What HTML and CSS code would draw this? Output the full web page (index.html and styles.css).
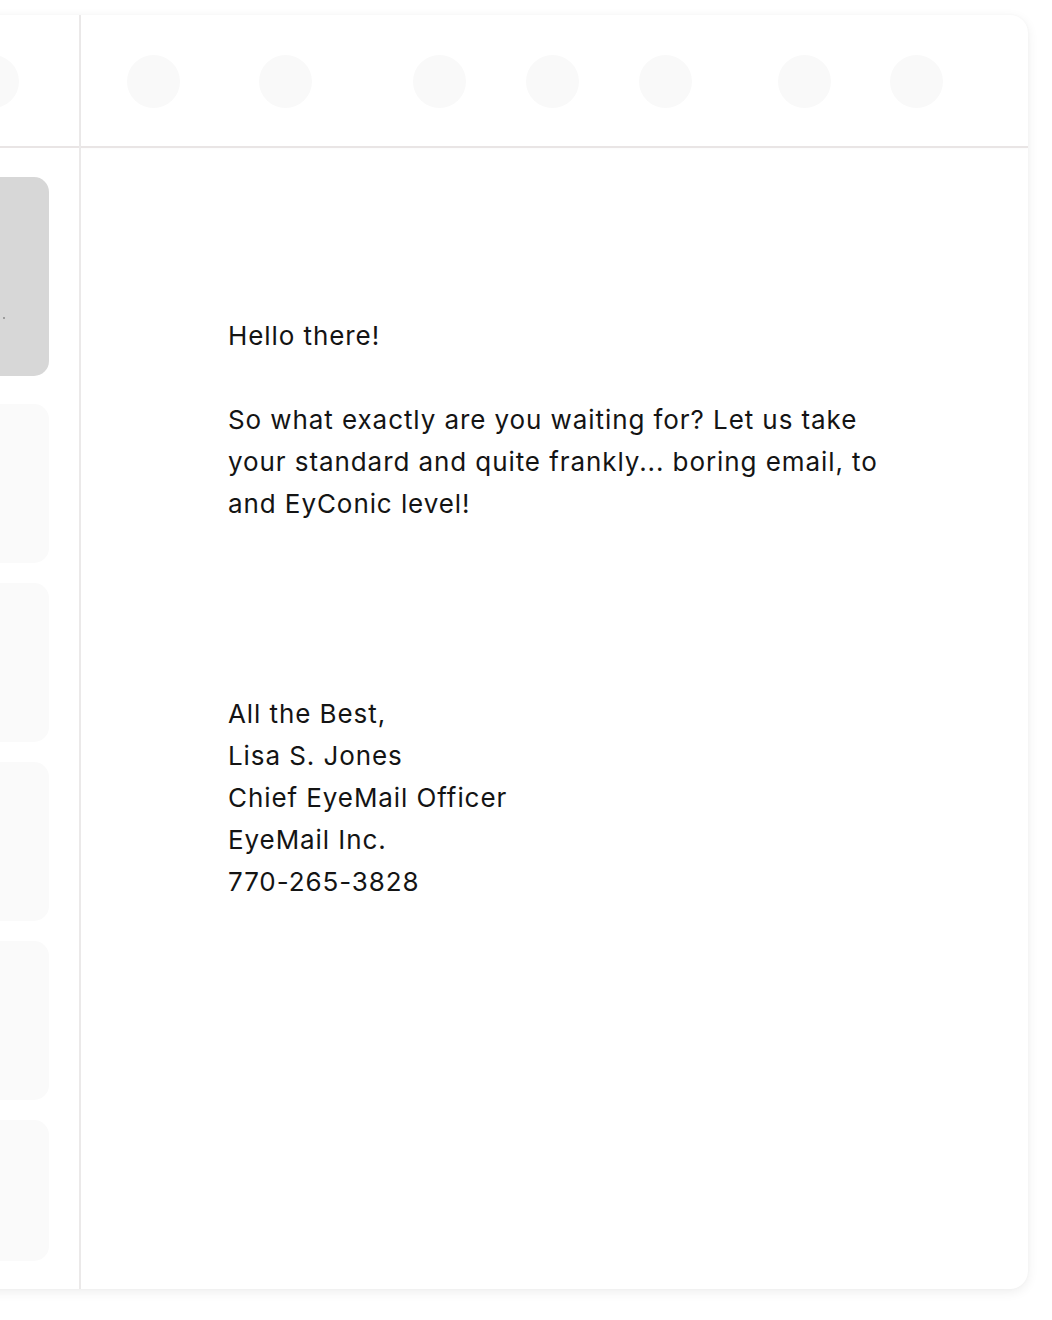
FILE: index.html
```html
<!DOCTYPE html>
<html lang="en">
<head>
<meta charset="utf-8">
<title>EyeMail preview</title>
<link rel="stylesheet" href="styles.css">
</head>
<body>
<div class="page">
  <div class="card">
    <aside class="sidebar">
      <div class="sidebar-header">
        <span class="circle"></span>
      </div>
      <div class="list">
        <div class="item item-active"><span class="dot"></span></div>
        <div class="item"></div>
        <div class="item"></div>
        <div class="item"></div>
        <div class="item"></div>
        <div class="item item-last"></div>
      </div>
    </aside>
    <main class="main">
      <div class="toolbar">
        <span class="circle"></span>
        <span class="circle gap-79"></span>
        <span class="circle gap-101"></span>
        <span class="circle gap-60"></span>
        <span class="circle gap-60"></span>
        <span class="circle gap-86"></span>
        <span class="circle gap-59"></span>
      </div>
      <div class="content">
        <p class="para">Hello there!</p>
        <p class="para">So what exactly are you waiting for? Let us take your standard and quite frankly... boring email, to and EyConic level!</p>
        <p class="signature">All the Best,<br>Lisa S. Jones<br>Chief EyeMail Officer<br>EyeMail Inc.<br>770-265-3828</p>
      </div>
    </main>
  </div>
</div>
</body>
</html>
```

FILE: styles.css
```css
html, body {
  margin: 0;
  padding: 0;
  background: #ffffff;
  overflow: hidden;
}

.page {
  width: 1052px;
  height: 1320px;
  box-sizing: border-box;
  padding: 15px 24px 31px 0;
  display: flex;
}

.card {
  flex: 1;
  display: flex;
  margin-left: -200px;
  background: #ffffff;
  border-radius: 18px;
  box-shadow: 0 3px 12px rgba(0, 0, 0, 0.07), 0 0 3px rgba(0, 0, 0, 0.03);
  overflow: hidden;
}

.sidebar {
  width: 281px;
  flex-shrink: 0;
  box-sizing: border-box;
  border-right: 2px solid #ebe9e9;
  display: flex;
  flex-direction: column;
}

.sidebar-header {
  height: 129px;
  flex-shrink: 0;
  border-bottom: 2px solid #e9e5e5;
  display: flex;
  align-items: center;
  justify-content: flex-end;
  padding-right: 60px;
  padding-top: 2px;
  box-sizing: content-box;
}

.circle {
  width: 53px;
  height: 53px;
  border-radius: 50%;
  background: #f9f9f9;
  flex-shrink: 0;
}

.list {
  display: flex;
  flex-direction: column;
  gap: 20px;
  padding: 29px 30px 0 30px;
}

.item {
  height: 159px;
  border-radius: 15px;
  background: #fafafa;
}

.item-active {
  height: 199px;
  background: #d7d7d7;
  margin-bottom: 8px;
  display: flex;
  justify-content: flex-end;
  align-items: flex-start;
}

.item-last {
  height: 141px;
}

.dot {
  width: 2px;
  height: 2px;
  background: #8a8a8a;
  border-radius: 50%;
  margin-top: 140px;
  margin-right: 44px;
}

.main {
  flex: 1;
  display: flex;
  flex-direction: column;
  min-width: 0;
}

.toolbar {
  height: 129px;
  flex-shrink: 0;
  border-bottom: 2px solid #e9e5e5;
  display: flex;
  align-items: center;
  padding-left: 46px;
  padding-top: 2px;
  box-sizing: content-box;
  box-shadow: 0 1px 2px rgba(0, 0, 0, 0.02);
}

.gap-79 { margin-left: 79px; }
.gap-101 { margin-left: 101px; }
.gap-60 { margin-left: 60px; }
.gap-86 { margin-left: 86px; }
.gap-59 { margin-left: 59px; }

.content {
  padding: 167px 147px 0 147px;
  font-family: Inter, "Noto Sans", "Liberation Sans", sans-serif;
  font-size: 26px;
  line-height: 42px;
  letter-spacing: 0.92px;
  color: #141414;
}

.para {
  margin: 0 0 42px 0;
}

.signature {
  margin: 168px 0 0 0;
}
```
